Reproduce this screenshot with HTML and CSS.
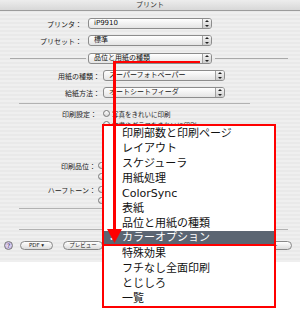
FILE: index.html
```html
<!DOCTYPE html>
<html lang="ja">

<head>
    <meta charset="UTF-8">
    <title>プリント</title>
    <link rel="stylesheet" href="styles.css">
</head>

<body>
    <div class="window">
        <div class="titlebar">プリント</div>

        <div class="sheet">
            <div class="top">
                <div class="row">
                    <span class="label">プリンタ：</span>
                    <div class="popup">iP9910<i class="cap"></i></div>
                </div>
                <div class="row">
                    <span class="label">プリセット：</span>
                    <div class="popup">標準<i class="cap"></i></div>
                </div>
                <div class="row panel-row">
                    <span class="rule left"></span>
                    <div class="popup">品位と用紙の種類<i class="cap"></i></div>
                    <span class="rule right"></span>
                </div>
            </div>

            <div class="paper">
                <div class="row">
                    <span class="label">用紙の種類：</span>
                    <div class="popup">スーパーフォトペーパー<i class="cap"></i></div>
                </div>
                <div class="row">
                    <span class="label">給紙方法：</span>
                    <div class="popup">オートシートフィーダ<i class="cap"></i></div>
                </div>
            </div>

            <div class="sep"></div>

            <!-- lower rows sit mostly under the open menu -->
            <div class="quality">
                <div class="row">
                    <span class="label">印刷設定：</span>
                    <i class="radio"></i><span class="opt">写真をきれいに印刷</span>
                </div>
                <div class="row">
                    <span class="label"></span>
                    <i class="radio"></i><span class="opt">文書やグラフをきれいに印刷</span>
                </div>
                <div class="row">
                    <span class="label"></span>
                    <i class="radio"></i>
                </div>
                <div class="row">
                    <span class="label"></span>
                    <i class="radio"></i>
                </div>
                <div class="row tight gap">
                    <span class="label">印刷品位：</span>
                    <i class="radio"></i>
                </div>
                <div class="row tight">
                    <span class="label"></span>
                    <i class="radio"></i>
                </div>
                <div class="row tight gap-sm">
                    <span class="label">ハーフトーン：</span>
                    <i class="radio"></i>
                </div>
                <div class="row tight">
                    <span class="label"></span>
                    <i class="radio"></i>
                </div>
            </div>

            <div class="sep short"></div>
            <div class="sep wide"></div>
        </div>

        <div class="bottom">
            <span class="help">?</span>
            <span class="btn pdf">PDF ▾</span>
            <span class="btn preview">プレビュー</span>
            <span class="btn print">プリント</span>
        </div>
    </div>

    <!-- open panel menu -->
    <div class="menu">
        <ul>
            <li>印刷部数と印刷ページ</li>
            <li>レイアウト</li>
            <li>スケジューラ</li>
            <li>用紙処理</li>
            <li>ColorSync</li>
            <li>表紙</li>
            <li>品位と用紙の種類</li>
            <li class="on"><span class="check">✓</span>カラーオプション</li>
            <li>特殊効果</li>
            <li>フチなし全面印刷</li>
            <li>とじしろ</li>
            <li>一覧</li>
        </ul>
    </div>

    <!-- red annotation arrow -->
    <svg class="annot" width="300" height="309" viewBox="0 0 300 309">
        <rect x="113" y="61" width="87" height="2" fill="#f00"/>
        <rect x="113" y="61" width="3" height="170" fill="#f00"/>
        <polygon points="107,229 122,229 114.5,243" fill="#f00"/>
    </svg>
</body>

</html>
```

FILE: styles.css
```css
/* Page */
body {
    margin: 0;
    width: 300px;
    height: 309px;
    overflow: hidden;
    position: relative;
    background: #fff;
    font-family: "DejaVu Sans", "Noto Sans CJK JP", sans-serif;
    color: #222;
}

/* Dialog window */
.window {
    height: 262px;
    background: repeating-linear-gradient(#efefef 0 2px, #e9e9e9 2px 4px);
}

.titlebar {
    height: 10px;
    line-height: 10px;
    text-align: center;
    font-size: 7px;
    color: #333;
    background: linear-gradient(#ededed, #d8d8d8);
    border-bottom: 1px solid #9c9c9c;
}

.sheet {
    padding-top: 7px;
}

/* Rows */
.row {
    display: flex;
    align-items: center;
    height: 11px;
}

.top .row + .row {
    margin-top: 6px;
}

.top .panel-row {
    margin-top: 7px !important;
}

.paper {
    margin-top: 6px;
}

.paper .row + .row {
    margin-top: 6px;
}

.label {
    flex: none;
    font-size: 7px;
    text-align: right;
    white-space: nowrap;
    color: #222;
}

.top .label {
    width: 82px;
    margin-right: 6px;
}

.paper .label {
    width: 100px;
    margin-right: 3px;
}

.quality .label {
    width: 97px;
    margin-right: 6px;
}

.quality .tight .label {
    width: 96px;
    margin-right: 2px;
}

/* Popup buttons */
.popup {
    position: relative;
    flex: none;
    height: 11px;
    box-sizing: border-box;
    border: 1px solid #8c8c8c;
    border-radius: 3px;
    background: linear-gradient(#fff, #e4e4e4);
    font-size: 7px;
    line-height: 9px;
    padding-left: 5px;
    color: #111;
    white-space: nowrap;
}

.top .popup {
    width: 124px;
}

.paper .popup {
    width: 122px;
}

.cap {
    position: absolute;
    right: 0;
    top: 0;
    bottom: 0;
    width: 8px;
    border-left: 1px solid #a0a0a0;
    border-radius: 0 2px 2px 0;
    background: linear-gradient(#f6f6f6, #cdcdcd);
}

.cap::before,
.cap::after {
    content: "";
    position: absolute;
    left: 2px;
    border-left: 2px solid transparent;
    border-right: 2px solid transparent;
}

.cap::before {
    top: 1px;
    border-bottom: 2px solid #222;
}

.cap::after {
    bottom: 1px;
    border-top: 2px solid #222;
}

.rule {
    height: 1px;
    background: #a9a9a9;
}

.rule.left {
    margin-left: 10px;
    width: 76px;
    margin-right: 2px;
}

.rule.right {
    margin-left: 3px;
    width: 73px;
}

/* Separators */
.sep {
    height: 1px;
    background: #b2b2b2;
    margin: 5px 0 0 19px;
    width: 231px;
}

.sep.short {
    margin-top: 2px;
}

.sep.wide {
    margin-top: 20px;
    width: 269px;
}

/* Radio rows */
.quality {
    margin-top: 4px;
}

.quality .row:nth-child(3) {
    margin-top: 1px;
}

.quality .gap {
    margin-top: 7px;
}

.quality .gap-sm {
    margin-top: 2px;
}

.radio {
    flex: none;
    width: 7px;
    height: 7px;
    box-sizing: border-box;
    border: 1px solid #777;
    border-radius: 50%;
    background: linear-gradient(#fff, #d6d6d6);
    margin-right: 2px;
}

.opt {
    font-size: 6.5px;
    white-space: nowrap;
    color: #222;
}

/* Bottom buttons */
.bottom {
    display: flex;
    align-items: center;
    height: 9px;
    margin-top: 11px;
    padding-left: 4px;
}

.help {
    width: 9px;
    height: 9px;
    box-sizing: border-box;
    border: 1px solid #7a7a7a;
    border-radius: 50%;
    background: radial-gradient(#efe8fb, #b8a6dc);
    font-size: 6px;
    line-height: 7px;
    text-align: center;
    color: #302040;
}

.btn {
    height: 9px;
    box-sizing: border-box;
    border: 1px solid #888;
    border-radius: 5px;
    background: linear-gradient(#fff, #dcdcdc);
    font-size: 5.5px;
    line-height: 7px;
    text-align: center;
    white-space: nowrap;
    color: #222;
}

.pdf {
    width: 33px;
    margin-left: 7px;
}

.preview {
    width: 40px;
    margin-left: 10px;
}

.print {
    width: 50px;
    margin-left: auto;
    margin-right: 8px;
}

/* Open popup menu */
.menu {
    position: absolute;
    left: 102px;
    top: 124px;
    width: 174px;
    height: 184px;
    box-sizing: border-box;
    border: 2px solid #f00;
    background: #fff;
    font-size: 11px;
    color: #111;
}

.menu ul {
    margin: 0;
    padding: 0;
    list-style: none;
}

.menu li {
    position: relative;
    height: 15px;
    line-height: 15px;
    padding-left: 18px;
    white-space: nowrap;
}

.menu li.on {
    box-sizing: border-box;
    background: #5b6572;
    color: #fff;
    border-bottom: 2px solid #f00;
    line-height: 13px;
}

.check {
    position: absolute;
    left: 5px;
    font-size: 10px;
}

/* Annotation overlay */
.annot {
    position: absolute;
    left: 0;
    top: 0;
    pointer-events: none;
}
```
